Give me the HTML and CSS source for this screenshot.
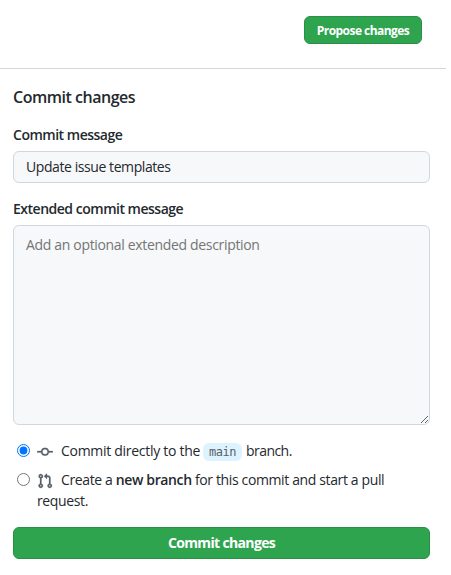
FILE: index.html
```html
<!DOCTYPE html>
<html lang="en">
<head>
<meta charset="utf-8">
<title>Commit changes</title>
<link rel="stylesheet" href="styles.css">
</head>
<body>
<header class="toolbar"><button class="btn btn-small" type="button">Propose changes</button></header>
<form class="commit-form">
  <h1 class="title"><span>Commit changes</span></h1>
  <label class="label" for="message"><span>Commit message</span></label>
  <input class="field" id="message" type="text" value="Update issue templates">
  <label class="label" for="description"><span>Extended commit message</span></label>
  <textarea class="field description" id="description" placeholder="Add an optional extended description"></textarea>
  <div class="choice">
    <input class="radio" type="radio" name="target" id="direct" checked>
    <label class="choice-text" for="direct"><svg class="icon" viewBox="0 0 16 16"><path fill-rule="evenodd" d="M10.5 7.75a2.5 2.5 0 11-5 0 2.5 2.5 0 015 0zm1.43.75a4.002 4.002 0 01-7.86 0H.75a.75.75 0 110-1.5h3.32a4.001 4.001 0 017.86 0h3.32a.75.75 0 110 1.5h-3.32z"/></svg><span class="before-branch">Commit directly to the</span><code class="branch">main</code><span class="after-branch">branch.</span></label>
  </div>
  <div class="choice choice-new">
    <input class="radio" type="radio" name="target" id="pull">
    <label class="choice-text" for="pull"><svg class="icon" viewBox="0 0 16 16"><path fill-rule="evenodd" d="M7.177 3.073L9.573.677A.25.25 0 0110 .854v4.792a.25.25 0 01-.427.177L7.177 3.427a.25.25 0 010-.354zM3.75 2.5a.75.75 0 100 1.5.75.75 0 000-1.5zm-2.25.75a2.25 2.25 0 113 2.122v5.256a2.251 2.251 0 11-1.5 0V5.372A2.25 2.25 0 011.5 3.25zM11 2.5h-1V4h1a1 1 0 011 1v5.628a2.251 2.251 0 101.5 0V5A2.5 2.5 0 0011 2.5zm1 10.25a.75.75 0 111.5 0 .75.75 0 01-1.5 0zM3.75 12a.75.75 0 100 1.5.75.75 0 000-1.5z"/></svg><span class="pull-text">Create a <b>new branch</b> for this commit and start a pull<br>request.</span></label>
  </div>
  <button class="btn btn-block" type="button">Commit changes</button>
</form>
</body>
</html>
```

FILE: styles.css
```css
* { box-sizing: border-box; }
body {
  margin: 0;
  background: #fff;
  color: #24292e;
  font: 14px/21px "Segoe UI", "Open Sans", sans-serif;
  letter-spacing: -0.35px;
}
.toolbar {
  display: flex;
  justify-content: flex-end;
  width: 446px;
  height: 69px;
  padding: 16px 24px 0 0;
  border-bottom: 1px solid #d0d7de;
}
.btn {
  padding: 0;
  border: 1px solid #2a8f47;
  border-radius: 6px;
  background: #2ea44f;
  color: #fff;
  font-family: inherit;
  font-weight: 700;
}
.btn-small { width: 118px; height: 28px; font-size: 12px; letter-spacing: -0.55px; }
.btn-block { display: block; width: 100%; height: 32px; margin-top: 16px; font-size: 14px; padding-bottom: 1px; letter-spacing: -0.65px; }
.commit-form { width: 417px; margin-left: 13px; }
.title { margin: 16px 0 0; font-size: 16px; line-height: 24px; font-weight: 550; letter-spacing: -0.48px; }
.label { display: block; margin-top: 15px; font-weight: 600; letter-spacing: -0.49px; }
.field {
  display: block;
  width: 100%;
  height: 32px;
  margin-top: 6px;
  padding: 4px 12px 5px;
  border: 1px solid #d0d7de;
  border-radius: 6px;
  background: #f6f8fa;
  color: #24292e;
  font: inherit;
  letter-spacing: -0.42px;
}
.field::placeholder { color: #757575; opacity: 1; }
.description { height: 200px; padding-top: 8px; letter-spacing: -0.33px; resize: vertical; }
.choice { display: flex; align-items: flex-start; margin-top: 15px; }
.choice-new { margin-top: 8px; }
.radio { flex: none; width: 13px; height: 13px; margin: 4px 7px 0 4px; }
.choice-text { white-space: nowrap; }
.icon { width: 16px; height: 16px; margin-right: 8px; vertical-align: -4px; fill: #586069; stroke: #586069; stroke-width: 0.25px; }
.before-branch { letter-spacing: -0.29px; }
.after-branch { letter-spacing: -0.55px; }
.pull-text { letter-spacing: -0.37px; }
.branch {
  display: inline-block;
  width: 39px;
  height: 18px;
  margin: 0 4px 0 3px;
  border-radius: 6px;
  background: #ddf4ff;
  color: #586069;
  font: 12px/18px "DejaVu Sans Mono", monospace;
  letter-spacing: -0.5px;
  text-align: center;
}
b { font-weight: 600; }
```
